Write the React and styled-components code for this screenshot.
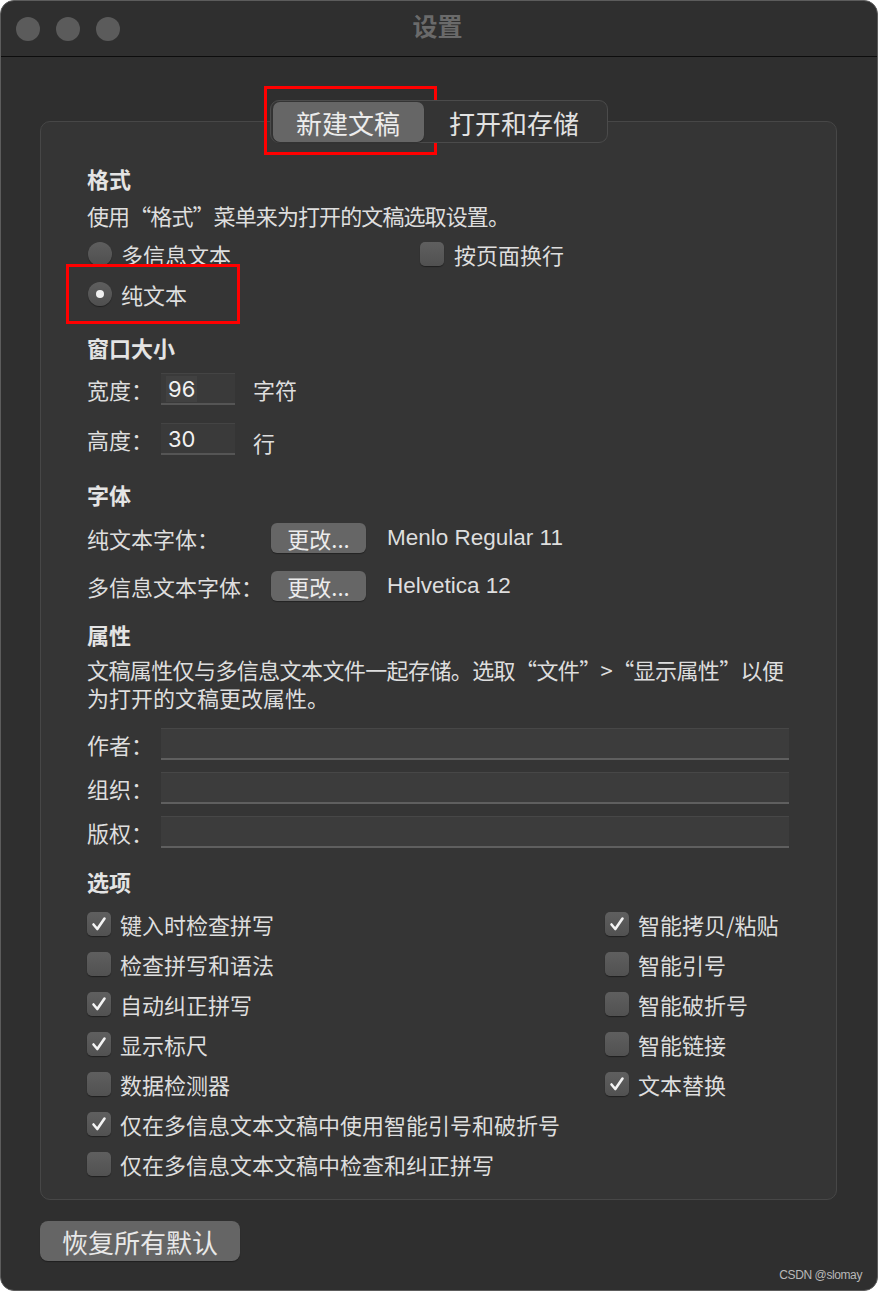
import React from "react";
import styled, { createGlobalStyle } from "styled-components";

const GlobalStyle = createGlobalStyle`
  html, body {
    margin: 0;
    padding: 0;
    background: #ffffff;
  }
  body {
    font-family: "Noto Sans CJK SC", "Liberation Sans", sans-serif;
  }
`;

const Window = styled.div`
  position: relative;
  width: 878px;
  height: 1291px;
  box-sizing: border-box;
  background: #2f2f2f;
  border: 1px solid #5c5c5c;
  border-radius: 14px;
  overflow: hidden;
  display: flex;
  flex-direction: column;
  color: #dedede;
`;

const TitleBar = styled.div`
  flex: none;
  height: 55px;
  display: grid;
  grid-template-columns: 1fr auto 1fr;
  align-items: center;
  border-bottom: 1px solid #0d0d0d;
  padding: 0 15px;
`;

const Lights = styled.div`
  display: flex;
  gap: 16px;
`;

const Light = styled.span`
  width: 24px;
  height: 24px;
  border-radius: 50%;
  background: #5b5b5b;
`;

const Title = styled.div`
  font-size: 25px;
  font-weight: bold;
  color: #6a6a6a;
  margin-top: -7px;
  margin-right: 3px;
`;

const Body = styled.div`
  flex: 1;
  display: flex;
  flex-direction: column;
  padding: 43px 40px 0 39px;
`;

const TabRow = styled.div`
  position: relative;
  z-index: 1;
  display: flex;
  justify-content: center;
  margin-bottom: -22px;
`;

const Segmented = styled.div`
  display: flex;
  height: 43px;
  box-sizing: border-box;
  padding: 1px 2px;
  background: #343434;
  border: 1px solid #4b4b4b;
  border-radius: 9px;
`;

const Segment = styled.div`
  height: 40px;
  display: flex;
  align-items: center;
  justify-content: center;
  width: ${(p) => p.$w}px;
  font-size: 26px;
  color: ${(p) => (p.$active ? "#ececec" : "#e2e2e2")};
  background: ${(p) => (p.$active ? "#666666" : "transparent")};
  border-radius: 7px;
  box-shadow: ${(p) => (p.$active ? "0 1px 1px rgba(0,0,0,0.35)" : "none")};
`;

const Box = styled.div`
  background: #353535;
  border: 1px solid #474747;
  border-radius: 10px;
  padding: 41px 47px 15px 46px;
  display: flex;
  flex-direction: column;
`;

const Row = styled.div`
  display: flex;
  align-items: center;
  height: ${(p) => p.$h || 30}px;
  margin-top: ${(p) => p.$mt || 0}px;
  font-size: 22px;
  white-space: nowrap;
  letter-spacing: ${(p) => p.$ls || 0}px;
`;

const Heading = styled(Row)`
  font-weight: bold;
  color: #e4e4e4;
`;

const Paragraph = styled.div`
  margin-top: ${(p) => p.$mt || 0}px;
  display: flex;
  flex-direction: column;
  font-size: 22px;
  white-space: nowrap;
`;

const ParaLine = styled.span`
  height: 28px;
  line-height: 28px;
  letter-spacing: ${(p) => p.$ls || 0}px;
`;

const SplitRow = styled(Row)`
  display: grid;
  grid-template-columns: 333px 1fr;
`;

const Choice = styled.label`
  display: flex;
  align-items: center;
  gap: ${(p) => p.$gap || 9}px;
  font-size: 22px;
  color: #dedede;
`;

const RadioDot = styled.span`
  width: 24px;
  height: 24px;
  border-radius: 50%;
  margin-left: 1px;
  box-sizing: border-box;
  background: linear-gradient(#5e5e5e, #4f4f4f);
  box-shadow: 0 1px 1px rgba(0, 0, 0, 0.4);
  display: flex;
  align-items: center;
  justify-content: center;
  &::after {
    content: "";
    width: 8px;
    height: 8px;
    border-radius: 50%;
    background: #f0f0f0;
    display: ${(p) => (p.$on ? "block" : "none")};
  }
`;

const Box24 = styled.span`
  flex: none;
  width: 24px;
  height: 24px;
  border-radius: 5px;
  background: linear-gradient(#5f5f5f, #515151);
  box-shadow: 0 1px 1px rgba(0, 0, 0, 0.4);
  display: flex;
  align-items: center;
  justify-content: center;
`;

const Label = styled.span`
  width: ${(p) => p.$w}px;
  flex: none;
`;

const SmallField = styled.div`
  width: 74px;
  height: 32px;
  box-sizing: border-box;
  background: #3a3a3a;
  border-top: 1px solid #444444;
  border-bottom: 2px solid #555555;
  display: flex;
  align-items: center;
  padding-left: 5px;
  font-family: "Inter", "Liberation Sans", sans-serif;
  font-size: 22px;
  color: #f2f2f2;
`;

const FieldValue = styled.span`
  background: ${(p) => (p.$selected ? "#414141" : "transparent")};
  padding: 0 2px;
`;

const Unit = styled.span`
  margin-left: 18px;
  margin-top: ${(p) => p.$drop || 0}px;
`;

const ChangeButton = styled.div`
  width: 95px;
  height: 30px;
  border-radius: 6px;
  background: #666666;
  box-shadow: 0 1px 1px rgba(0, 0, 0, 0.35);
  display: flex;
  align-items: center;
  justify-content: center;
  color: #ececec;
  font-size: 22px;
`;

const FontName = styled.span`
  margin-left: 21px;
  font-family: "Liberation Sans", "Noto Sans CJK SC", sans-serif;
  font-size: 22.5px;
`;

const WideField = styled.div`
  flex: 1;
  height: 32px;
  box-sizing: border-box;
  background: #3c3c3c;
  border-top: 1px solid #474747;
  border-bottom: 2px solid #5f5f5f;
`;

const OptionGrid = styled.div`
  margin-top: ${(p) => p.$mt || 0}px;
  display: grid;
  grid-template-columns: 518px 1fr;
  grid-auto-rows: 40px;
  align-items: center;
`;

const OptionCell = styled.div`
  grid-column: ${(p) => (p.$wide ? "1 / -1" : "auto")};
`;

const Footer = styled.div`
  margin-top: 21px;
  display: flex;
`;

const ResetButton = styled.div`
  width: 200px;
  height: 40px;
  border-radius: 8px;
  background: #656565;
  box-shadow: 0 1px 1px rgba(0, 0, 0, 0.35);
  display: flex;
  align-items: center;
  justify-content: center;
  font-size: 26px;
  color: #e8e8e8;
`;

const Watermark = styled.div`
  position: absolute;
  right: 15px;
  bottom: 8px;
  font-family: "Liberation Sans", sans-serif;
  font-size: 12px;
  letter-spacing: -0.4px;
  color: #b9b9b9;
`;

const Annotation = styled.div`
  position: absolute;
  left: ${(p) => p.$x}px;
  top: ${(p) => p.$y}px;
  width: ${(p) => p.$w}px;
  height: ${(p) => p.$h}px;
  box-sizing: border-box;
  border: 3px solid #ff0000;
  pointer-events: none;
`;

function Check({ on }) {
  return (
    <Box24>
      {on && (
        <svg width="20" height="20" viewBox="0 0 20 20">
          <path
            d="M4.5 10.5 L8.3 15 L15.5 4.5"
            fill="none"
            stroke="#f4f4f4"
            strokeWidth="2.6"
            strokeLinecap="round"
            strokeLinejoin="round"
          />
        </svg>
      )}
    </Box24>
  );
}

const options = [
  { text: "键入时检查拼写", on: true },
  { text: "智能拷贝/粘贴", on: true },
  { text: "检查拼写和语法", on: false },
  { text: "智能引号", on: false },
  { text: "自动纠正拼写", on: true },
  { text: "智能破折号", on: false },
  { text: "显示标尺", on: true },
  { text: "智能链接", on: false },
  { text: "数据检测器", on: false },
  { text: "文本替换", on: true },
  { text: "仅在多信息文本文稿中使用智能引号和破折号", on: true, wide: true },
  { text: "仅在多信息文本文稿中检查和纠正拼写", on: false, wide: true },
];

export default function App() {
  return (
    <>
      <GlobalStyle />
      <Window>
        <TitleBar>
          <Lights>
            <Light />
            <Light />
            <Light />
          </Lights>
          <Title>设置</Title>
          <span />
        </TitleBar>

        <Body>
          <TabRow>
            <Segmented>
              <Segment $active $w={151}>新建文稿</Segment>
              <Segment $w={181}>打开和存储</Segment>
            </Segmented>
          </TabRow>

          <Box>
            <Heading>格式</Heading>
            <Row $mt={7} $ls={-0.9}>
              使用“格式”菜单来为打开的文稿选取设置。
            </Row>
            <SplitRow $h={34} $mt={7}>
              <Choice>
                <RadioDot />
                多信息文本
              </Choice>
              <Choice $gap={10}>
                <Check on={false} />
                按页面换行
              </Choice>
            </SplitRow>
            <Row $h={34} $mt={6}>
              <Choice>
                <RadioDot $on />
                纯文本
              </Choice>
            </Row>

            <Heading $mt={21}>窗口大小</Heading>
            <Row $h={32} $mt={11}>
              <Label $w={74}>宽度：</Label>
              <SmallField>
                <FieldValue $selected>96</FieldValue>
              </SmallField>
              <Unit>字符</Unit>
            </Row>
            <Row $h={32} $mt={18}>
              <Label $w={74}>高度：</Label>
              <SmallField>
                <FieldValue>30</FieldValue>
              </SmallField>
              <Unit $drop={6}>行</Unit>
            </Row>

            <Heading $mt={24}>字体</Heading>
            <Row $mt={14}>
              <Label $w={184}>纯文本字体：</Label>
              <ChangeButton>更改...</ChangeButton>
              <FontName>Menlo Regular 11</FontName>
            </Row>
            <Row $mt={18}>
              <Label $w={184}>多信息文本字体：</Label>
              <ChangeButton>更改...</ChangeButton>
              <FontName>Helvetica 12</FontName>
            </Row>

            <Heading $mt={18}>属性</Heading>
            <Paragraph $mt={6}>
              <ParaLine $ls={-0.6}>
                文稿属性仅与多信息文本文件一起存储。选取“文件”&gt;“显示属性”以便
              </ParaLine>
              <ParaLine>为打开的文稿更改属性。</ParaLine>
            </Paragraph>
            <Row $h={32} $mt={17}>
              <Label $w={74}>作者：</Label>
              <WideField />
            </Row>
            <Row $h={32} $mt={12}>
              <Label $w={74}>组织：</Label>
              <WideField />
            </Row>
            <Row $h={32} $mt={12}>
              <Label $w={74}>版权：</Label>
              <WideField />
            </Row>

            <Heading $mt={18}>选项</Heading>
            <OptionGrid $mt={8}>
              {options.map((o) => (
                <OptionCell key={o.text} $wide={o.wide}>
                  <Choice>
                    <Check on={o.on} />
                    {o.text}
                  </Choice>
                </OptionCell>
              ))}
            </OptionGrid>
          </Box>

          <Footer>
            <ResetButton>恢复所有默认</ResetButton>
          </Footer>
        </Body>

        <Watermark>CSDN @slomay</Watermark>
        <Annotation $x={263} $y={85} $w={173} $h={69} />
        <Annotation $x={65} $y={263} $w={174} $h={60} />
      </Window>
    </>
  );
}
